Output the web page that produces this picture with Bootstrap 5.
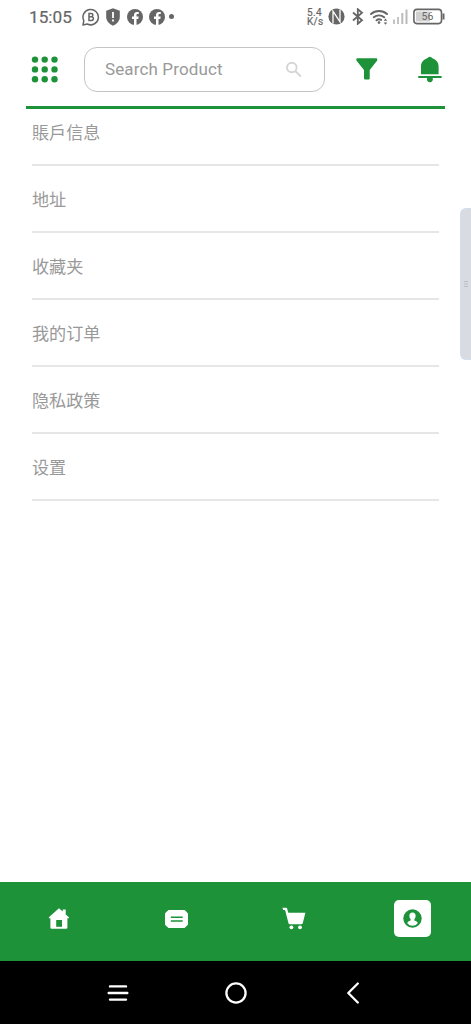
<!DOCTYPE html>
<html lang="zh">
<head>
<meta charset="utf-8">
<meta name="viewport" content="width=device-width, initial-scale=1">
<title>Account</title>
<link href="https://cdn.jsdelivr.net/npm/bootstrap@5.3.0/dist/css/bootstrap.min.css" rel="stylesheet">
<style>
:root { --brand: #1d9239; --ink: #666; }
body { font-family: Roboto, "Noto Sans CJK SC", sans-serif; background: #fff; overflow: hidden; }
svg { display: block; flex: none; }
.status { height: 33px; padding: 0 26px 0 29px; color: var(--ink); }
.clock { font-size: 17.2px; line-height: 34px; width: 53px; -webkit-text-stroke: .2px; }
.speed { font-size: 10px; line-height: 9px; width: 21px; letter-spacing: .35px; -webkit-text-stroke: .2px; }
.speed span { display: block; height: 9px; }
.topbar { height: 76px; margin: 0 26px; padding: 14px 3px 0 5px; border-bottom: 3px solid var(--brand); color: var(--brand); }
.search { width: 241px; height: 45px; margin-left: 25px; border: 1.5px solid #c4c4c4; border-radius: 13px; padding: 0 22px 0 20px; }
.search span { font-size: 17px; color: #999; letter-spacing: .13px; }
.list-group-flush > .menu-row { height: 67px; padding: 20.5px 0 0; border: 0; border-bottom: 2px solid #e6e6e6; font-family: "Noto Sans CJK SC", sans-serif; font-size: 17.1px; line-height: 24px; color: #999; background: none; }
.list-group-flush > .menu-row:first-child { height: 57px; padding-top: 10.5px; }
.list-group-flush > .menu-row:last-child { border-bottom: 2px solid #e6e6e6; }
.tabs { height: 79px; background: var(--brand); color: #fff; padding-bottom: 6px; }
.tabs > a { color: #fff; }
.active-tab { width: 37px; height: 37px; border-radius: 5px; background: #fff; color: var(--brand); }
.sysbar { height: 63px; background: #000; color: #fff; padding: 0 58.5px; }
.edge-handle { top: 208px; right: 0; width: 11px; height: 152px; background: #d8dbe1; border: 1px solid #d3deeb; border-right: 0; border-radius: 6px 0 0 6px; }
</style>
</head>
<body>
<div class="vh-100 d-flex flex-column position-relative">
  <div class="status d-flex align-items-center">
    <span class="clock">15:05</span>
    <svg width="18" height="18" viewBox="0 0 18 18" fill="none" stroke="#666"><path d="M1 17l.8-4.400A7.700 7.700 0 1 1 5.200 16z" stroke-width="1.500" stroke-linejoin="round"/><path d="M7 5.400h2.200a1.700 1.700 0 0 1 0 3.400H7zM7 8.800h2.600a1.800 1.800 0 0 1 0 3.600H7z" stroke-width="1.500"/></svg>
    <svg style="margin-left:6px" width="14" height="18" viewBox="0 0 14 18"><path d="M7 .3l6.800 2.500v6.300c0 4-3 7-6.800 8.600C3.200 16.100.2 13.100.2 9.100V2.800z" fill="#666"/><path d="M6.100 4h1.800v6H6.100zM6.100 11.600h1.800v1.900H6.100z" fill="#fff"/></svg>
    <svg style="margin-left:7px" width="16" height="16" viewBox="0 0 16 16"><circle cx="8" cy="8" r="8" fill="#666"/><path d="M7 16V9.900H5V7.500h2V6c0-2 1.200-3.100 3-3.100l1.800.1v2h-1c-1 0-1.300.5-1.300 1.200v1.300h2.200l-.4 2.400H9.500V16z" fill="#fff"/></svg>
    <svg style="margin-left:6px" width="16" height="16" viewBox="0 0 16 16"><circle cx="8" cy="8" r="8" fill="#666"/><path d="M7 16V9.900H5V7.500h2V6c0-2 1.200-3.100 3-3.100l1.800.1v2h-1c-1 0-1.300.5-1.300 1.200v1.300h2.200l-.4 2.400H9.500V16z" fill="#fff"/></svg>
    <svg style="margin-left:4px" width="5" height="5"><circle cx="2.500" cy="2.500" r="2.500" fill="#666"/></svg>
    <div class="ms-auto d-flex align-items-center">
      <div class="speed"><span>5.4</span><span>K/s</span></div>
      <svg width="17" height="17" viewBox="0 0 17 17"><circle cx="8.500" cy="8.500" r="8.100" fill="#666"/><path d="M5 15.500V3.200l7 10.600V1.500" fill="none" stroke="#fff" stroke-width="1.300"/></svg>
      <svg style="margin-left:7px" width="12" height="17" viewBox="0 0 12 17" fill="none" stroke="#666" stroke-width="1.800"><path d="M1 4.500l9 7.700-4.200 3.600V1.200L10 4.800 1 12.500"/></svg>
      <svg style="margin-left:6px" width="19" height="16" viewBox="0 0 19 16" fill="none" stroke="#666" stroke-width="1.900" stroke-linecap="round"><path d="M1 5a12 12 0 0 1 16 0M3.800 8.300a8 8 0 0 1 10.400 0M6.500 11.300a4.200 4.200 0 0 1 4.600-.4"/><circle cx="9" cy="13.600" r="1.300" fill="#666" stroke="none"/><path d="M13.700 11.700L15.500 9.500l1.800 2.200zM13.700 13.500l1.800 2.200 1.800-2.200z" fill="#666" stroke="none"/></svg>
      <svg style="margin-left:4px" width="15" height="15" viewBox="0 0 15 15" stroke-width="2"><path d="M1 10.500V15M5 8v7" stroke="#c4c4c4"/><path d="M9.300 4v11M13.500 .5V15" stroke="#bbb"/></svg>
      <svg style="margin-left:5px" width="32" height="17" viewBox="0 0 32 17"><rect x=".9" y="1.400" width="27.600" height="14.200" rx="3" fill="#fff" stroke="#666" stroke-width="1.600"/><path d="M3 3.500h14v10H3z" fill="#d0d0d0"/><path d="M30.500 5.500v6" stroke="#666" stroke-width="2"/><text x="14.500" y="12.400" text-anchor="middle" font-size="10.500" font-family="Roboto" fill="#666">56</text></svg>
    </div>
  </div>

  <header class="topbar d-flex align-items-start">
    <svg style="margin-top:9px" width="28" height="27" viewBox="0 0 28 27" fill="currentColor"><g id="r"><circle cx="4" cy="3.600" r="3.200"/><circle cx="13.700" cy="3.600" r="3.200"/><circle cx="23.500" cy="3.600" r="3.200"/></g><use href="#r" y="9.800"/><use href="#r" y="19.600"/></svg>
    <div class="search d-flex align-items-center justify-content-between">
      <span>Search Product</span>
      <svg width="17" height="17" viewBox="0 0 17 17" fill="none" stroke="#d5d5d5" stroke-width="1.900"><circle cx="6.800" cy="6.500" r="4.800"/><path d="M10.300 10l5.500 5.500"/></svg>
    </div>
    <svg style="margin:11px 0 0 31px" width="22" height="22" viewBox="0 0 22 22" fill="currentColor"><path d="M1 .3h19.400q.8 0 .8.800v1.500L13.700 12v8.600q0 1-1 1H9q-1 0-1-1V12L.4 2.600V1.100q0-.8.600-.8z"/></svg>
    <svg class="ms-auto" style="margin-top:9px" width="24" height="28" viewBox="0 0 24 28" fill="currentColor"><path d="M3 18.200V10.500C3 6.300 5.700 3.200 9.300 2.200a2.800 2.800 0 0 1 5 0c3.600 1 6.300 4.100 6.300 8.300v7.700zM.3 20h23.300v2.100h-8.900a3 3 0 1 1-5.600 0H.3z"/></svg>
  </header>

  <nav class="list-group list-group-flush flex-grow-1" style="margin:0 32px">
    <a class="list-group-item menu-row">賬戶信息</a>
    <a class="list-group-item menu-row">地址</a>
    <a class="list-group-item menu-row">收藏夹</a>
    <a class="list-group-item menu-row">我的订单</a>
    <a class="list-group-item menu-row">隐私政策</a>
    <a class="list-group-item menu-row">设置</a>
  </nav>

  <nav class="tabs row g-0 align-items-center">
    <a class="col d-flex justify-content-center"><svg width="22" height="22" viewBox="0 0 22 22"><path d="M11 .3l3.700 3.300V1.400h3v5.100l3.200 2.800v1h-1.500v9.200q0 1.200-1.200 1.200H3.600q-1.200 0-1.200-1.200v-9.200H.9v-1z" fill="#fff"/><path d="M8.200 12H14v6.800H8.200z" fill="#1d9239"/></svg></a>
    <a class="col d-flex justify-content-center"><svg width="23" height="18" viewBox="0 0 23 18"><path d="M3.300.5h16.400l2.800 2.800v11.400l-2.800 2.800H3.300L.5 14.700V3.300z" fill="#fff" stroke="#fff" stroke-linejoin="round"/><path d="M5.800 7.200h11.900M5.800 11h11.900" stroke="#1d9239" stroke-width="1.600"/></svg></a>
    <a class="col d-flex justify-content-center"><svg width="24" height="23" viewBox="0 0 24 23" fill="#fff"><path d="M.4.700h3.700q.8 0 1 .8l1.200 4.300h17.100L20.800 16q-.3 1.200-1.500 1.200H7.700q-.9 0-1.200-1L3.100 2.900H1.200z"/><circle cx="9.400" cy="20.300" r="1.900"/><circle cx="18" cy="20.300" r="1.900"/></svg></a>
    <a class="col d-flex justify-content-center"><span class="active-tab d-flex align-items-center justify-content-center"><svg width="19" height="19" viewBox="0 0 19 19"><circle cx="9.500" cy="9.500" r="9.200" fill="currentColor"/><path d="M9.500 3.500c2.300 0 3.200 1.600 3.100 3.400 0 1.500-.6 2.500-1.200 3.200v1.500c1.700.6 3.100 1.100 3.300 2.600a6.500 6.500 0 0 1-10.400 0c.2-1.500 1.600-2 3.300-2.600v-1.500c-.6-.7-1.200-1.700-1.200-3.200-.1-1.800.8-3.400 3.100-3.400z" fill="#fff"/></svg></span></a>
  </nav>

  <div class="sysbar row g-0 align-items-center">
    <div class="col d-flex justify-content-center"><svg width="22" height="18" viewBox="0 0 22 18" stroke="#fff" stroke-width="2.400" stroke-linecap="round"><path d="M3 2.400h16M1.700 9h18.600M3 15.600h16"/></svg></div>
    <div class="col d-flex justify-content-center"><svg width="22" height="22" viewBox="0 0 22 22"><circle cx="11" cy="11" r="9.600" fill="none" stroke="#fff" stroke-width="2.300"/></svg></div>
    <div class="col d-flex justify-content-center"><svg width="14" height="22" viewBox="0 0 14 22"><path d="M10.800 1.500L1.300 11l9.500 9.500" fill="none" stroke="#fff" stroke-width="2.300" stroke-linecap="round" stroke-linejoin="round"/></svg></div>
  </div>

  <div class="edge-handle position-absolute d-flex align-items-center"><svg style="margin-left:3px" width="5" height="8" stroke="#b9bdc6"><path d="M0 1.500h4M0 4h4M0 6.500h4"/></svg></div>
</div>
<script src="https://cdn.jsdelivr.net/npm/bootstrap@5.3.0/dist/js/bootstrap.bundle.min.js"></script>
</body>
</html>
